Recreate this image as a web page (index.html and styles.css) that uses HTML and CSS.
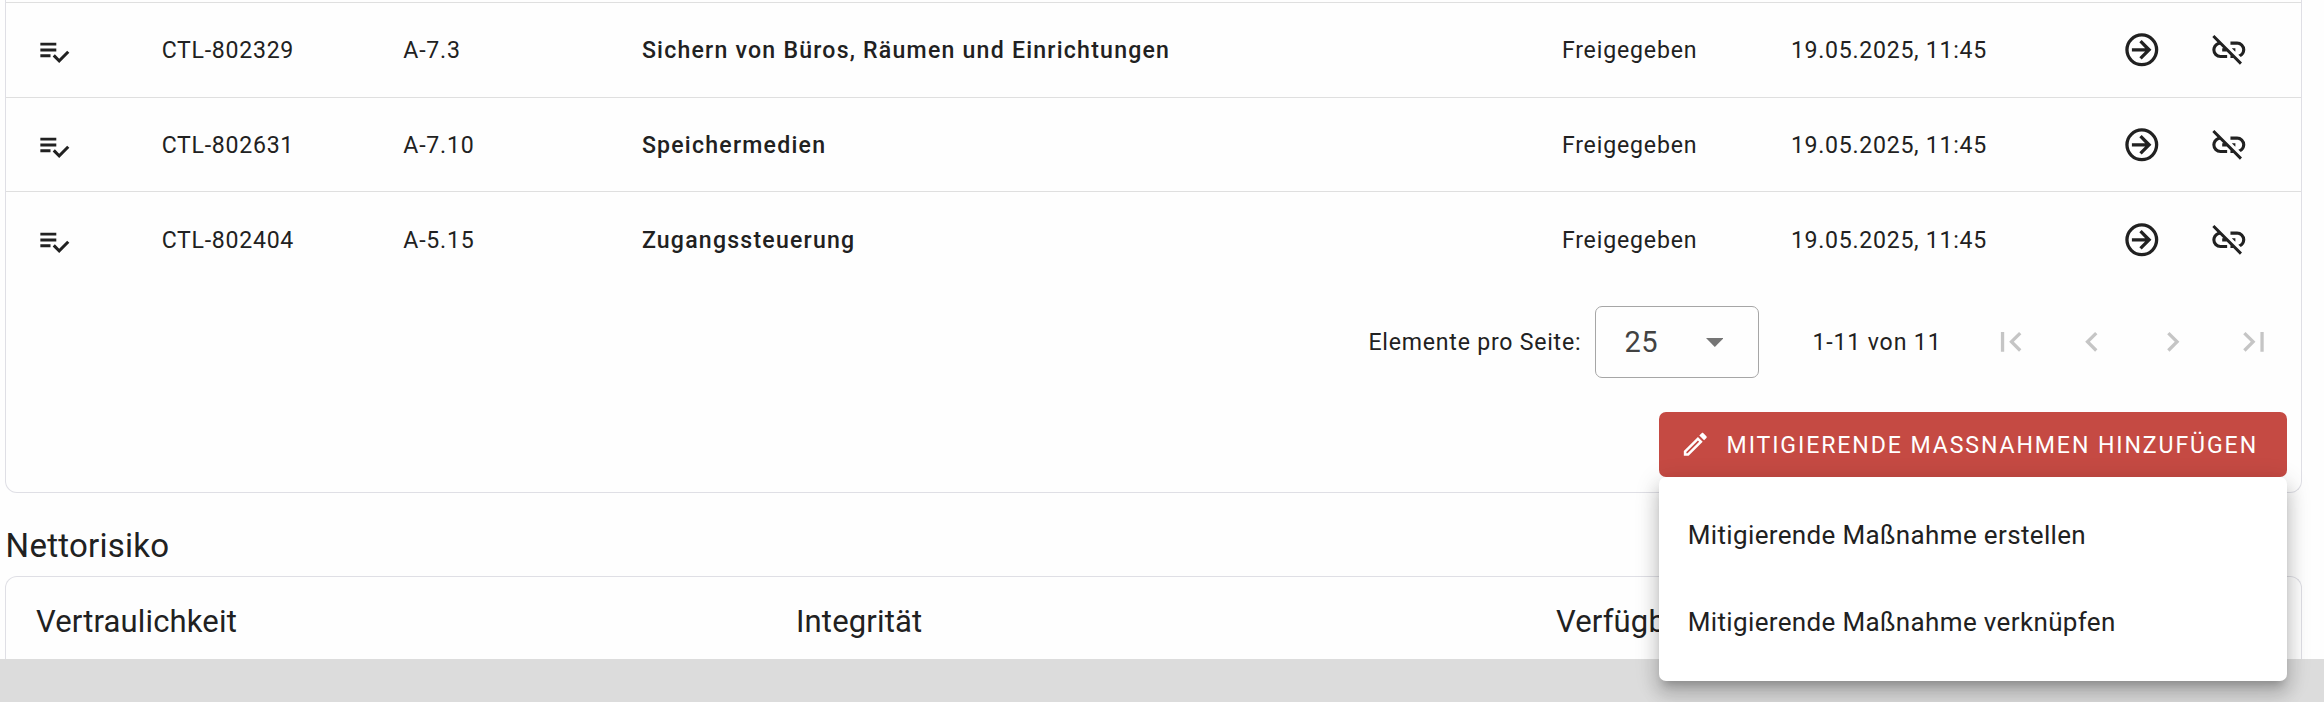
FILE: index.html
```
<!DOCTYPE html>
<html lang="de">
<head>
<meta charset="utf-8">
<title>Nettorisiko</title>
<link rel="stylesheet" href="styles.css">
</head>
<body>
<svg class="sprite" aria-hidden="true">
  <symbol id="playlist-check" viewBox="0 0 24 24"><path d="M14 10H3V12H14V10M14 6H3V8H14V6M3 16H10V14H3V16M21.5 11.5L23 13L16 20L11.5 15.5L13 14L16 17L21.5 11.5Z"/></symbol>
  <symbol id="arrow-circle" viewBox="0 0 24 24"><path d="M22,12A10,10 0 0,1 12,22A10,10 0 0,1 2,12A10,10 0 0,1 12,2A10,10 0 0,1 22,12M20,12A8,8 0 0,0 12,4A8,8 0 0,0 4,12A8,8 0 0,0 12,20A8,8 0 0,0 20,12M6,13V11H14L10.5,7.5L11.92,6.08L17.84,12L11.92,17.92L10.5,16.5L14,13H6Z"/></symbol>
  <symbol id="link-off" viewBox="0 0 24 24"><path d="M17,7H13V8.9H17C18.71,8.9 20.1,10.29 20.1,12C20.1,13.43 19.12,14.63 17.79,15L19.25,16.44C20.88,15.61 22,13.95 22,12A5,5 0 0,0 17,7M16,11H13.81L15.81,13H16V11M2,4.27L5.11,7.38C3.29,8.12 2,9.91 2,12A5,5 0 0,0 7,17H11V15.1H7C5.29,15.1 3.9,13.71 3.9,12C3.9,10.41 5.11,9.1 6.66,8.93L8.73,11H8V13H10.73L13,15.27V17H14.73L18.74,21L20,19.74L3.27,3L2,4.27Z"/></symbol>
  <symbol id="pencil" viewBox="0 0 24 24"><path d="M14.06,9L15,9.94L5.92,19H5V18.08L14.06,9M17.66,3C17.41,3 17.15,3.1 16.96,3.29L15.13,5.12L18.88,8.87L20.71,7.04C21.1,6.65 21.1,6 20.71,5.63L18.37,3.29C18.17,3.09 17.92,3 17.66,3M14.06,6.19L3,17.25V21H6.75L17.81,9.94L14.06,6.19Z"/></symbol>
</svg>

<main class="page">
  <section class="card controls">
    <div class="row row-first">
      <svg class="icon-list"><use href="#playlist-check"/></svg>
      <span class="cell cell-id">CTL-802329</span>
      <span class="cell cell-ref">A-7.3</span>
      <span class="cell cell-title">Sichern von Büros, Räumen und Einrichtungen</span>
      <span class="cell cell-status">Freigegeben</span>
      <span class="cell cell-date">19.05.2025, 11:45</span>
      <svg class="icon-action"><use href="#arrow-circle"/></svg>
      <svg class="icon-action"><use href="#link-off"/></svg>
    </div>
    <div class="row row-middle">
      <svg class="icon-list"><use href="#playlist-check"/></svg>
      <span class="cell cell-id">CTL-802631</span>
      <span class="cell cell-ref">A-7.10</span>
      <span class="cell cell-title">Speichermedien</span>
      <span class="cell cell-status">Freigegeben</span>
      <span class="cell cell-date">19.05.2025, 11:45</span>
      <svg class="icon-action"><use href="#arrow-circle"/></svg>
      <svg class="icon-action"><use href="#link-off"/></svg>
    </div>
    <div class="row row-last">
      <svg class="icon-list"><use href="#playlist-check"/></svg>
      <span class="cell cell-id">CTL-802404</span>
      <span class="cell cell-ref">A-5.15</span>
      <span class="cell cell-title">Zugangssteuerung</span>
      <span class="cell cell-status">Freigegeben</span>
      <span class="cell cell-date">19.05.2025, 11:45</span>
      <svg class="icon-action"><use href="#arrow-circle"/></svg>
      <svg class="icon-action"><use href="#link-off"/></svg>
    </div>

    <div class="pagination">
      <span class="per-page">Elemente pro Seite:</span>
      <div class="select">
        <span class="select-value">25</span>
        <svg class="caret" viewBox="0 0 18 9"><path d="M0 0H18L9 9Z"/></svg>
      </div>
      <span class="range">1-11 von 11</span>
      <div class="pager">
        <svg viewBox="0 0 24 24"><path d="M18.41,16.59L13.82,12L18.41,7.41L17,6L11,12L17,18L18.41,16.59M6,6H8V18H6V6Z"/></svg>
        <svg viewBox="0 0 24 24"><path d="M15.41,16.58L10.83,12L15.41,7.41L14,6L8,12L14,18L15.41,16.58Z"/></svg>
        <svg viewBox="0 0 24 24"><path d="M8.59,16.58L13.17,12L8.59,7.41L10,6L16,12L10,18L8.59,16.58Z"/></svg>
        <svg viewBox="0 0 24 24"><path d="M5.59,7.41L10.18,12L5.59,16.59L7,18L13,12L7,6L5.59,7.41M16,6H18V18H16V6Z"/></svg>
      </div>
    </div>

    <div class="actions">
      <div class="dropdown">
        <button class="add-button" type="button">
          <svg class="icon-pencil"><use href="#pencil"/></svg>
          <span class="add-label">MITIGIERENDE MASSNAHMEN HINZUFÜGEN</span>
        </button>
        <div class="menu">
          <div class="menu-item">Mitigierende Maßnahme erstellen</div>
          <div class="menu-item">Mitigierende Maßnahme verknüpfen</div>
        </div>
      </div>
    </div>
  </section>

  <h2 class="section-title">Nettorisiko</h2>

  <section class="card risk">
    <h3>Vertraulichkeit</h3>
    <h3>Integrität</h3>
    <h3>Verfügbarkeit</h3>
  </section>

  <footer class="footer"></footer>
</main>
</body>
</html>
```
FILE: styles.css
```
* {
  box-sizing: border-box;
}

body {
  margin: 0;
  background: #fefefe;
  color: #212121;
  font-family: Roboto, sans-serif;
  font-size: 23.1px;
}

svg {
  display: block;
  fill: currentColor;
}

.sprite {
  display: none;
}

.page {
  display: flex;
  flex-direction: column;
  height: 702px;
  overflow: hidden;
}

.card {
  flex: none;
  width: 2297px;
  margin-left: 5px;
  border: 1px solid #dfdfe5;
}

/* Table of controls */
.controls {
  height: 493px;
  padding-top: 2px;
  border-top: 0;
  border-radius: 0 0 12px 12px;
}

.row {
  display: grid;
  grid-template-columns: 126px 241.6px 238.6px 920px 229px 330.8px 87.2px 39.6px;
  align-items: start;
  padding: 33px 0 0 29.7px;
  border-bottom: 1px solid #dfdfdf;
}

.row-first {
  height: 96px;
  border-top: 1px solid #dfdfdf;
}

.row-middle {
  height: 94px;
}

.row-last {
  height: 95px;
  padding-top: 34px;
  border-bottom: 0;
}

.cell {
  line-height: 30px;
  white-space: nowrap;
}

.cell-id {
  letter-spacing: 0.72px;
}

.cell-ref {
  letter-spacing: 0.8px;
}

.cell-title {
  font-weight: 500;
  letter-spacing: 1.22px;
}

.cell-status {
  letter-spacing: 0.83px;
}

.cell-date {
  letter-spacing: 0.72px;
}

.icon-list {
  width: 34.8px;
  height: 34.8px;
  margin-top: -2.4px;
}

.icon-action {
  width: 39.6px;
  height: 39.6px;
  margin-top: -6.3px;
}

/* Pagination */
.pagination {
  display: flex;
  align-items: center;
  justify-content: flex-end;
  height: 72px;
  margin-top: 19px;
  padding-right: 27px;
  white-space: nowrap;
}

.per-page {
  width: 227px;
  padding-top: 1px;
  letter-spacing: 0.77px;
}

.select {
  display: flex;
  align-items: center;
  justify-content: space-between;
  width: 164px;
  height: 72px;
  margin-right: 53px;
  padding: 0 35px 0 28px;
  border: 1px solid #a6a6a6;
  border-radius: 7px;
}

.select-value {
  color: #424242;
  font-size: 29px;
  letter-spacing: 0.4px;
}

.caret {
  width: 17.6px;
  height: 9px;
  color: #757575;
}

.range {
  width: 179px;
  padding-top: 1px;
  letter-spacing: 0.85px;
}

.pager {
  display: flex;
  gap: 41.4px;
  color: #c5c5c5;
}

.pager svg {
  width: 39.6px;
  height: 39.6px;
}

/* Button with its open menu */
.actions {
  display: flex;
  justify-content: flex-end;
  margin: 34px 14px 0 0;
}

.dropdown {
  position: relative;
  z-index: 2;
  width: 628px;
}

.add-button {
  display: flex;
  align-items: center;
  gap: 15.8px;
  width: 100%;
  height: 65px;
  padding: 0 0 0 21.2px;
  border: 0;
  border-radius: 7px;
  background: #c54a43;
  color: #fff;
  font: inherit;
  letter-spacing: 1.9px;
  white-space: nowrap;
}

.add-label {
  padding-top: 2px;
}

.icon-pencil {
  width: 30.6px;
  height: 30.6px;
}

.menu {
  position: absolute;
  top: 65px;
  left: 0;
  width: 100%;
  height: 204px;
  padding: 14px 0;
  border-radius: 7px;
  background: #fff;
  box-shadow:
    0 8px 8px -5px rgba(0, 0, 0, 0.2),
    0 13px 17px 2px rgba(0, 0, 0, 0.14),
    0 5px 23px 3px rgba(0, 0, 0, 0.12);
}

.menu-item {
  height: 87px;
  padding-left: 28.8px;
  font-size: 26px;
  line-height: 88px;
  letter-spacing: 0.35px;
}

/* Net risk */
.section-title {
  flex: none;
  margin: 33px 0 10px 5.6px;
  font-size: 33px;
  font-weight: 400;
  line-height: 40px;
  letter-spacing: 0.25px;
}

.risk {
  display: grid;
  grid-template-columns: 760px 760px 1fr;
  height: 83px;
  padding: 26px 0 0 30px;
  border-bottom: 0;
  border-radius: 12px 12px 0 0;
}

.risk h3 {
  margin: 0;
  font-size: 31px;
  font-weight: 400;
  line-height: 38px;
  letter-spacing: 0.15px;
}

.footer {
  flex: 1;
  background: #dcdcdc;
}
```
